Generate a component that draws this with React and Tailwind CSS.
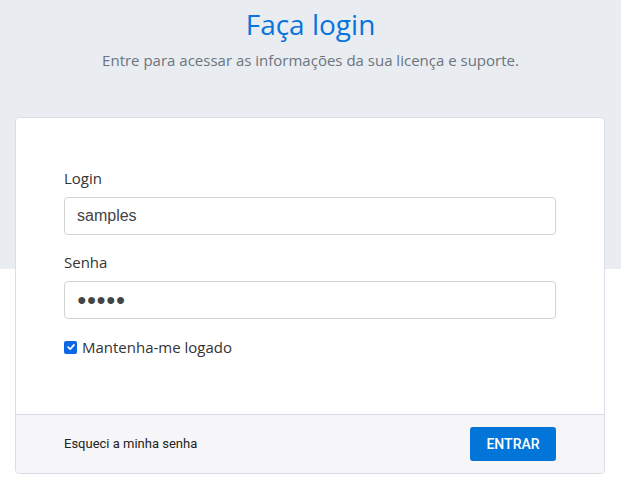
export default function App() {
  return (
    <div className="relative min-h-[487px] w-full bg-white">
      <div className="absolute inset-x-0 top-0 h-[269px] bg-[#e9ecf1]" />
      <div className="relative flex flex-col items-center font-['Open_Sans',sans-serif]">
        <h1 className="mt-[4px] text-[28px] leading-[40px] text-[#0a74da]">Faça login</h1>
        <p className="mt-[6px] text-[15px] leading-[20px] text-[#6c757d]">
          Entre para acessar as informações da sua licença e suporte.
        </p>
      </div>
      <div className="relative mt-[47px] pl-[15px] pr-[16px] font-['Open_Sans',sans-serif]">
        <div className="w-full overflow-hidden rounded-[4px] border border-[#d9dee6] bg-white">
          <div className="px-[48px] pb-[57px] pt-[49px]">
            <label className="block text-[15px] leading-[22px] text-[#333]">Login</label>
            <div className="mt-[8px] flex h-[38px] items-center rounded-[4px] border border-[#d4d4d4] px-[12px] font-['Liberation_Sans',sans-serif] text-[16px] text-[#444]">
              samples
            </div>
            <label className="mt-[16px] block text-[15px] leading-[22px] text-[#333]">Senha</label>
            <div className="mt-[8px] flex h-[38px] items-center rounded-[4px] border border-[#d4d4d4] px-[12px] font-['Liberation_Sans',sans-serif] text-[16px] text-[#444]">
              <span>●●●●●</span>
            </div>
            <div className="mt-[18px] flex items-center gap-[5px]">
              <span className="flex h-[13px] w-[13px] items-center justify-center rounded-[2px] bg-[#0b68e4]">
                <svg viewBox="0 0 12 12" className="h-[10px] w-[10px]" fill="none" stroke="white" strokeWidth="2" strokeLinecap="round" strokeLinejoin="round">
                  <path d="M2.5 6.2 L5 8.6 L9.6 3.4" />
                </svg>
              </span>
              <span className="text-[15px] leading-[20px] text-[#333]">Mantenha-me logado</span>
            </div>
          </div>
          <div className="flex h-[59px] items-center justify-between border-t border-[#d9dee6] bg-[#f6f6f8] pl-[48px] pr-[48px] font-['Roboto',sans-serif]">
            <span className="text-[13px] text-[#222]">Esqueci a minha senha</span>
            <button className="h-[34px] w-[86px] rounded-[3px] bg-[#0275d8] text-[14px] font-medium text-white">
              ENTRAR
            </button>
          </div>
        </div>
      </div>
    </div>
  );
}
